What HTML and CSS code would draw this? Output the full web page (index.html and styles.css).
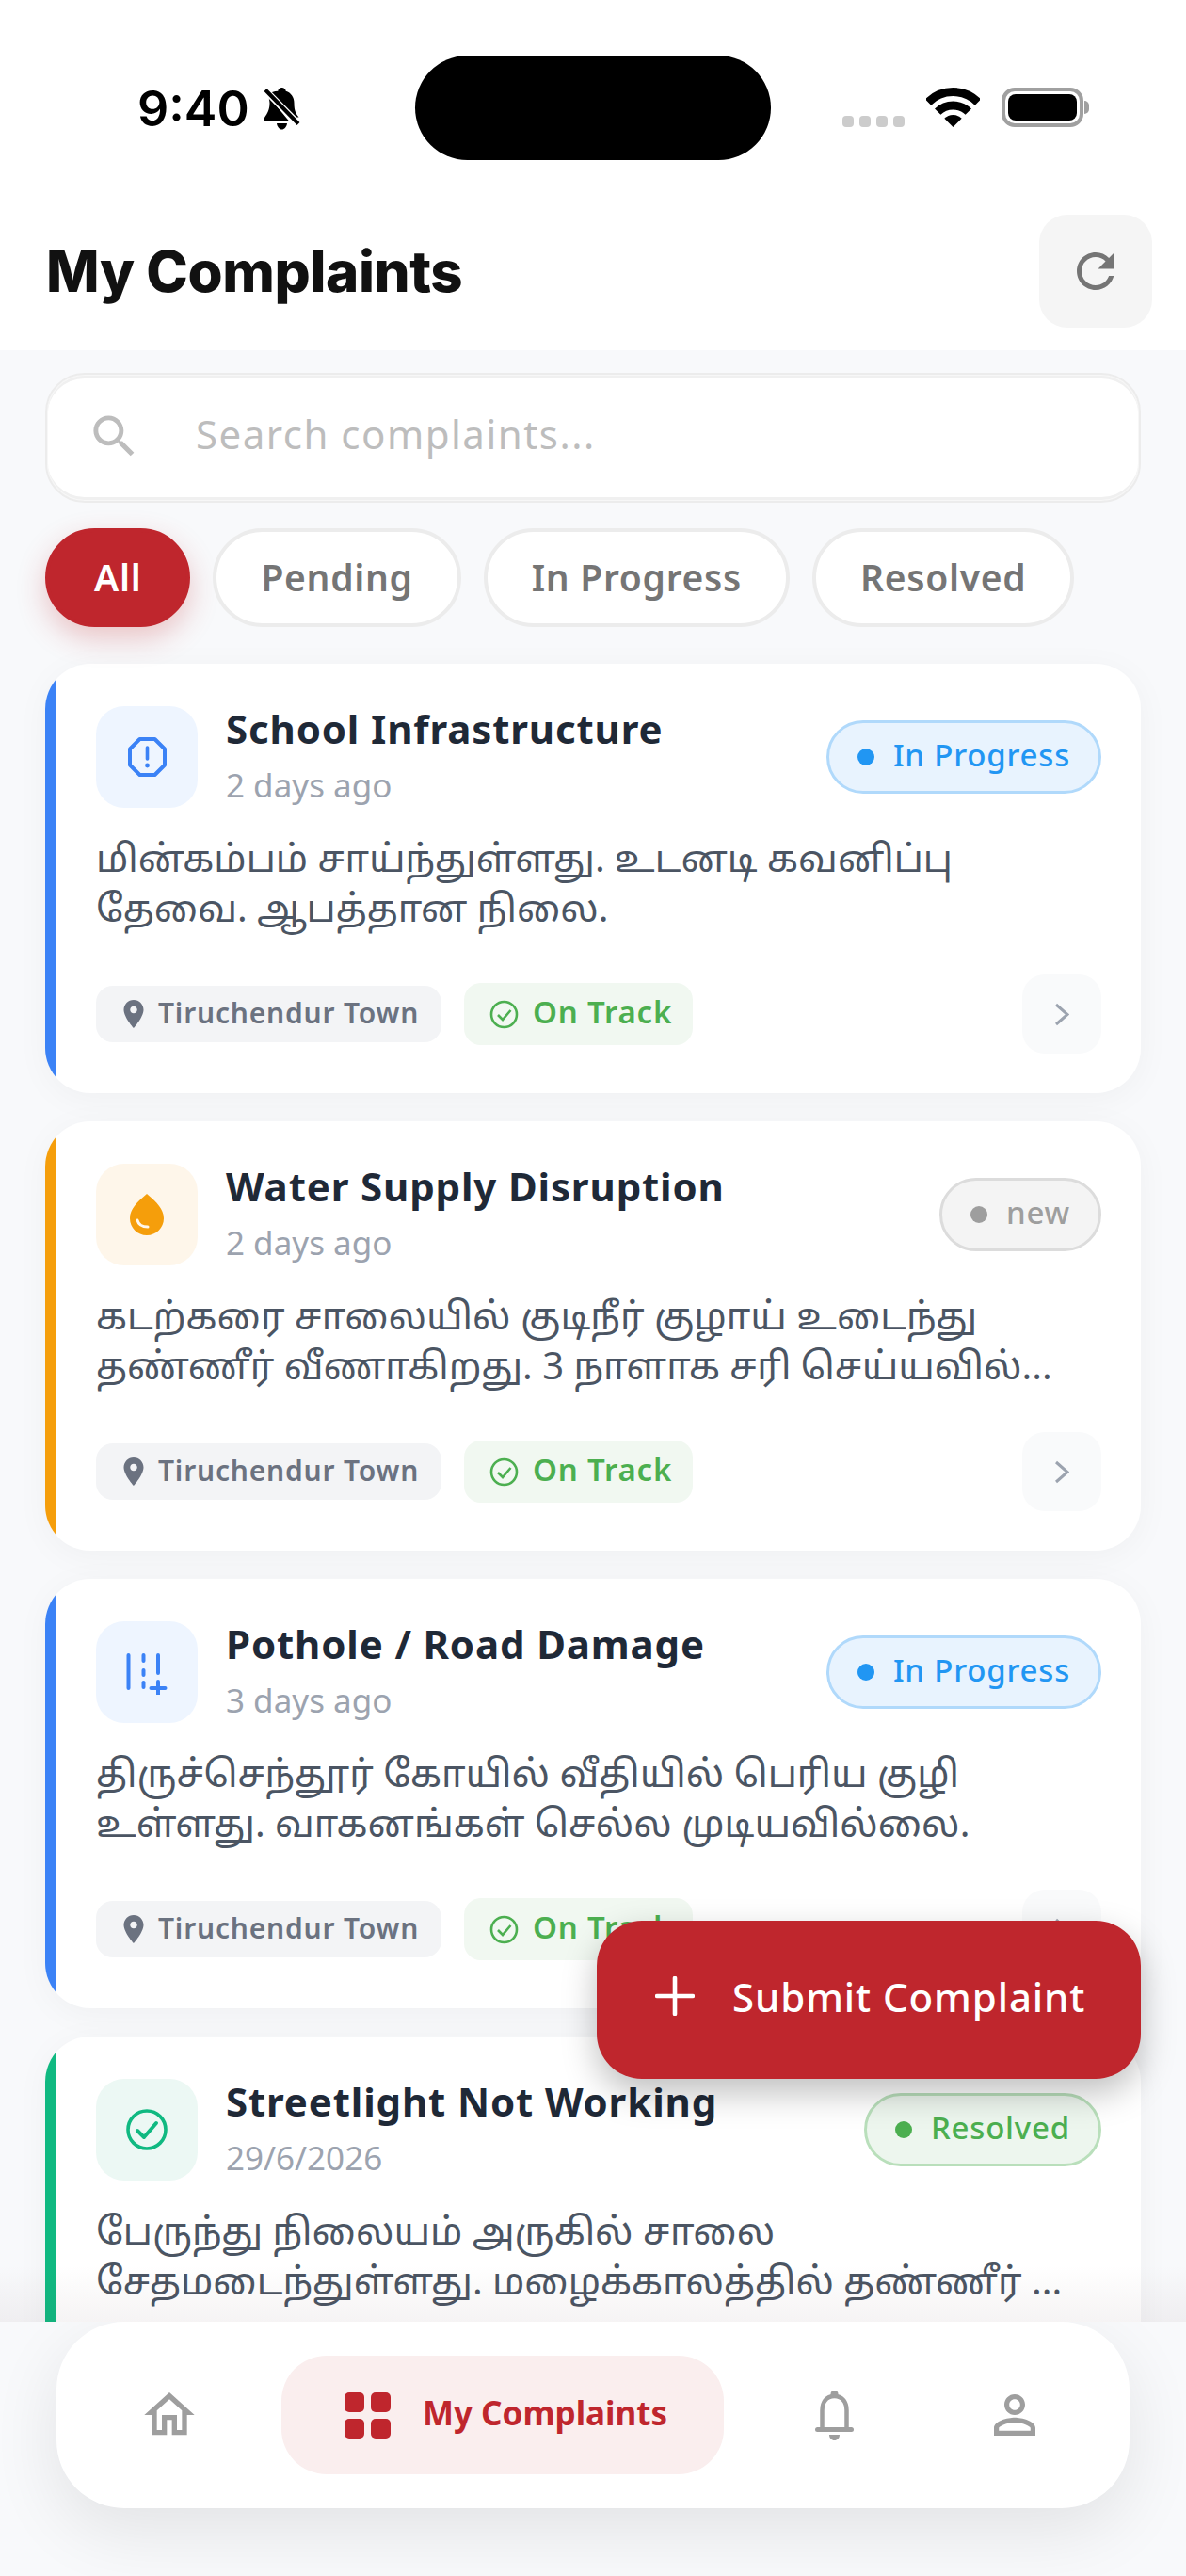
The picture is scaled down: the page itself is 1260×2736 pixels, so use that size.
FILE: index.html
```html
<!DOCTYPE html>
<html lang="en">
<head>
  <meta charset="UTF-8">
  <title>My Complaints</title>
  <link rel="stylesheet" href="styles.css">
</head>
<body>
  <svg class="sprite" width="0" height="0">
    <symbol id="pin" viewBox="0 0 24 24"><path d="M12 2C8.13 2 5 5.13 5 9c0 5.25 7 13 7 13s7-7.75 7-13c0-3.87-3.13-7-7-7zm0 9.5c-1.38 0-2.5-1.12-2.5-2.5s1.12-2.5 2.5-2.5 2.5 1.12 2.5 2.5-1.12 2.5-2.5 2.5z"/></symbol>
    <symbol id="track" viewBox="0 0 31 31"><circle cx="15.5" cy="15.5" r="13.5" fill="none" stroke="currentColor" stroke-width="2.6"/><path d="M9 16l5 5 8.500-10" fill="none" stroke="currentColor" stroke-width="2.6"/></symbol>
    <symbol id="chevron" viewBox="0 0 16 25"><path d="M2 2l12 10.500L2 23" fill="none" stroke="currentColor" stroke-width="3"/></symbol>
  </svg>

  <div class="phone">
    <div class="statusbar">
      <div class="status-left">
        <span class="clock">9:40</span>
        <svg class="bell-off" viewBox="0 0 41 45">
          <path d="M20.500 0c2.500 0 4 1.800 4.200 3.800 5.600 1.700 8.800 6.500 8.800 12.700 0 9 2.300 11.500 5 15l-6 0L7.500 9.500C6 11.500 7.500 13 7.500 16.500c0 7-2.500 11-5.500 15.500-1 2-.3 3.500 2 3.500h24L9 12.500 7 6.500c2-1.400 5-2.400 9.300-2.700C16.500 1.800 18 0 20.500 0z"/>
          <path d="M15 38h11c-.5 4-3 6.500-5.500 6.500S15.500 42 15 38z"/>
          <path d="M2 2l37 37.500" fill="none" stroke="#fff" stroke-width="7"/>
          <path d="M3 2.500l35 36" fill="none" stroke="#000" stroke-width="4"/>
        </svg>
      </div>
      <div class="island"></div>
      <div class="status-right">
        <div class="signal"><i></i><i></i><i></i><i></i></div>
        <svg class="wifi" viewBox="0 0 57 42">
          <path d="M28.500 42L19.300 32.800A13 13 0 0 1 37.700 32.800Z"/>
          <path d="M12.200 25.700A23 23 0 0 1 44.800 25.700" fill="none" stroke="#000" stroke-width="9"/>
          <path d="M2 15.500A37.500 37.500 0 0 1 55 15.500" fill="none" stroke="#000" stroke-width="9"/>
        </svg>
        <div class="battery"><div class="battery-level"></div></div>
        <div class="battery-nub"></div>
      </div>
    </div>

    <header class="topbar">
      <h1>My Complaints</h1>
      <button class="refresh">
        <svg viewBox="0 0 24 24" width="60" height="60"><path d="M17.650 6.350C16.200 4.900 14.210 4 12 4c-4.420 0-7.990 3.580-7.990 8s3.570 8 7.990 8c3.730 0 6.840-2.550 7.730-6h-2.080c-.82 2.330-3.040 4-5.650 4-3.310 0-6-2.690-6-6s2.690-6 6-6c1.660 0 3.140.69 4.220 1.780L13 11h7V4l-2.350 2.350z"/></svg>
      </button>
    </header>

    <main class="content">
      <label class="search">
        <svg viewBox="0 0 24 24" width="59" height="59"><path d="M15.500 14h-.79l-.28-.27C15.410 12.590 16 11.110 16 9.500 16 5.910 13.090 3 9.500 3S3 5.910 3 9.500 5.910 16 9.500 16c1.610 0 3.090-.59 4.230-1.570l.27.28v.79l5 4.990L20.490 19l-4.990-5zm-6 0C7.010 14 5 11.990 5 9.500S7.010 5 9.500 5 14 7.010 14 9.500 11.990 14 9.500 14z"/></svg>
        <input type="text" placeholder="Search complaints...">
      </label>

      <div class="chips">
        <span class="chip active">All</span>
        <span class="chip">Pending</span>
        <span class="chip">In Progress</span>
        <span class="chip">Resolved</span>
      </div>

      <article class="card blue">
        <div class="card-head">
          <div class="card-icon">
            <svg viewBox="0 0 41 42" width="41" height="42"><path d="M12.500 2h16L39 12.500v17L28.500 40h-16L2 29.500v-17z" fill="none" stroke="currentColor" stroke-width="4" stroke-linejoin="round"/><path d="M20.500 11v12" stroke="currentColor" stroke-width="3.600" stroke-linecap="round"/><circle cx="20.500" cy="30" r="2.400" fill="currentColor"/></svg>
          </div>
          <div class="card-title">
            <h2>School Infrastructure</h2>
            <time>2 days ago</time>
          </div>
          <span class="status progress"><i></i>In Progress</span>
        </div>
        <p class="desc">மின்கம்பம் சாய்ந்துள்ளது. உடனடி கவனிப்பு<br>தேவை. ஆபத்தான நிலை.</p>
        <div class="card-foot">
          <span class="place"><svg width="36" height="36"><use href="#pin"/></svg>Tiruchendur Town</span>
          <span class="ontrack"><svg width="31" height="31"><use href="#track"/></svg>On Track</span>
          <span class="open"><svg width="16" height="25"><use href="#chevron"/></svg></span>
        </div>
      </article>

      <article class="card orange">
        <div class="card-head">
          <div class="card-icon">
            <svg viewBox="0 0 36 44" width="36" height="44"><path d="M18 0C10 7 0 15 0 26c0 10 8 18 18 18s18-8 18-18C36 15 26 7 18 0z" fill="currentColor"/><path d="M8 28c1 4 5 7 11 7" fill="none" stroke="#fff7eb" stroke-width="3" stroke-linecap="round"/></svg>
          </div>
          <div class="card-title">
            <h2>Water Supply Disruption</h2>
            <time>2 days ago</time>
          </div>
          <span class="status fresh"><i></i>new</span>
        </div>
        <p class="desc">கடற்கரை சாலையில் குடிநீர் குழாய் உடைந்து<br>தண்ணீர் வீணாகிறது. 3 நாளாக சரி செய்யவில்...</p>
        <div class="card-foot">
          <span class="place"><svg width="36" height="36"><use href="#pin"/></svg>Tiruchendur Town</span>
          <span class="ontrack"><svg width="31" height="31"><use href="#track"/></svg>On Track</span>
          <span class="open"><svg width="16" height="25"><use href="#chevron"/></svg></span>
        </div>
      </article>

      <article class="card blue">
        <div class="card-head">
          <div class="card-icon">
            <svg viewBox="0 0 44 48" width="44" height="48" fill="none" stroke="currentColor" stroke-width="4" stroke-linecap="round"><path d="M2.500 6v35M18.500 6v6M18.500 22v5M18.500 35v5M34 6v19M34 34v15M26.500 41h15"/></svg>
          </div>
          <div class="card-title">
            <h2>Pothole / Road Damage</h2>
            <time>3 days ago</time>
          </div>
          <span class="status progress"><i></i>In Progress</span>
        </div>
        <p class="desc">திருச்செந்தூர் கோயில் வீதியில் பெரிய குழி<br>உள்ளது. வாகனங்கள் செல்ல முடியவில்லை.</p>
        <div class="card-foot">
          <span class="place"><svg width="36" height="36"><use href="#pin"/></svg>Tiruchendur Town</span>
          <span class="ontrack"><svg width="31" height="31"><use href="#track"/></svg>On Track</span>
          <span class="open"><svg width="16" height="25"><use href="#chevron"/></svg></span>
        </div>
      </article>

      <article class="card green">
        <div class="card-head">
          <div class="card-icon">
            <svg viewBox="0 0 44 44" width="44" height="44" fill="none" stroke="currentColor" stroke-width="3.600"><circle cx="22" cy="22" r="20"/><path d="M12 23l7 7 13-15" stroke-width="4" stroke-linecap="round" stroke-linejoin="round"/></svg>
          </div>
          <div class="card-title">
            <h2>Streetlight Not Working</h2>
            <time>29/6/2026</time>
          </div>
          <span class="status done"><i></i>Resolved</span>
        </div>
        <p class="desc">பேருந்து நிலையம் அருகில் சாலை<br>சேதமடைந்துள்ளது. மழைக்காலத்தில் தண்ணீர் ...</p>
      </article>

      <div class="fade"></div>
    </main>

    <button class="fab">
      <svg viewBox="0 0 42 42" width="42" height="42"><path d="M21 2v38M2 21h38" stroke="#fff" stroke-width="4.600" stroke-linecap="round"/></svg>
      Submit Complaint
    </button>

    <div class="bottom">
      <nav class="tabs">
        <a class="tab">
          <svg viewBox="0 0 24 24" width="64" height="64"><path d="M12 5.690l5 4.500V18h-2v-6H9v6H7v-7.810l5-4.500M12 3L2 12h3v8h6v-6h2v6h6v-8h3L12 3z"/></svg>
        </a>
        <a class="tab tab-active">
          <svg viewBox="0 0 49 49" width="49" height="49"><rect width="21" height="21" rx="5"/><rect x="28" width="21" height="21" rx="5"/><rect y="28" width="21" height="21" rx="5"/><rect x="28" y="28" width="21" height="21" rx="5"/></svg>
          <span>My Complaints</span>
        </a>
        <a class="tab">
          <svg viewBox="0 0 41 53" width="41" height="53"><path d="M20.500 6C11.500 6 7.500 13 7.500 21v20.500h26V21C33.500 13 29.500 6 20.500 6z" fill="none" stroke="currentColor" stroke-width="4.500"/><circle cx="20.500" cy="4" r="4"/><path d="M2.500 41.500h36" stroke="currentColor" stroke-width="5" stroke-linecap="round"/><path d="M15 47h11c0 3.500-2.500 6-5.500 6S15 50.500 15 47z"/></svg>
        </a>
        <a class="tab">
          <svg viewBox="0 0 24 24" width="66" height="66"><path d="M12 5.900c1.160 0 2.100.94 2.100 2.100s-.94 2.100-2.100 2.100S9.900 9.160 9.900 8s.94-2.100 2.100-2.100m0 9c2.970 0 6.100 1.460 6.100 2.100v1.100H5.900V17c0-.64 3.130-2.100 6.100-2.100M12 4C9.790 4 8 5.790 8 8s1.790 4 4 4 4-1.790 4-4-1.790-4-4-4zm0 9c-2.670 0-8 1.340-8 4v3h16v-3c0-2.660-5.330-4-8-4z"/></svg>
        </a>
      </nav>
    </div>
  </div>
</body>
</html>
```

FILE: styles.css
```css
* {
  box-sizing: border-box;
}

body {
  margin: 0;
  font-family: "Noto Sans", "Noto Sans Tamil", sans-serif;
  background: #f8f9fb;
}

.sprite {
  position: absolute;
}

.phone {
  position: relative;
  width: 1260px;
  height: 2736px;
  display: flex;
  flex-direction: column;
  overflow: hidden;
  background: #f8f9fb;
}

/* status bar */
.statusbar {
  display: grid;
  grid-template-columns: 441px 378px 1fr;
  height: 228px;
  background: #fff;
}

.status-left {
  display: flex;
  align-items: center;
  gap: 14px;
  height: 45px;
  margin-top: 93px;
  padding-left: 146px;
}

.clock {
  font-family: Inter, sans-serif;
  font-size: 52px;
  font-weight: 600;
  line-height: 45px;
  color: #000;
}

.bell-off {
  width: 41px;
  height: 45px;
}

.island {
  height: 111px;
  margin-top: 59px;
  border-radius: 56px;
  background: #000;
}

.status-right {
  display: flex;
  align-items: flex-end;
  height: 42px;
  margin-top: 93px;
  padding-left: 76px;
}

.signal {
  display: flex;
  gap: 6px;
  margin-right: 23px;
}

.signal i {
  width: 12px;
  height: 12px;
  border-radius: 4px;
  background: #ccc;
}

.wifi {
  width: 57px;
  height: 42px;
  margin-right: 23px;
}

.battery {
  width: 87px;
  height: 42px;
  padding: 3px;
  border: 4px solid #a0a0a0;
  border-radius: 14px;
}

.battery-level {
  height: 100%;
  border-radius: 8px;
  background: #000;
}

.battery-nub {
  width: 5px;
  height: 14px;
  margin: 0 0 14px 1px;
  border-radius: 0 5px 5px 0;
  background: #a0a0a0;
}

/* header */
.topbar {
  display: flex;
  align-items: center;
  justify-content: space-between;
  padding: 0 36px 24px 49px;
  background: #fff;
}

.topbar h1 {
  margin: 0;
  font-family: Inter, sans-serif;
  font-size: 60px;
  font-weight: 800;
  letter-spacing: -.4px;
  color: #111;
}

.refresh {
  display: flex;
  align-items: center;
  justify-content: center;
  width: 120px;
  height: 120px;
  border: 0;
  border-radius: 30px;
  background: #f5f5f5;
  fill: #757575;
}

/* list */
.content {
  position: relative;
  flex: 1;
  min-height: 0;
  overflow: hidden;
  padding: 24px 48px 0;
}

.search {
  display: flex;
  align-items: center;
  gap: 57px;
  height: 138px;
  padding: 0 42px 10px 42px;
  border: 2px solid #ececec;
  border-radius: 42px;
  background: #fff;
  box-shadow: inset 0 0 0 1px #f7f7f7, inset 0 4px 0 #f0f0f0, inset 0 -4px 0 #f0f0f0;
  fill: #bdbdbd;
}

.search svg {
  margin-top: 6px;
}

.search input {
  flex: 1;
  border: 0;
  outline: 0;
  padding: 0;
  font: 400 42px "Noto Sans", sans-serif;
  letter-spacing: 1.5px;
  background: transparent;
}

.search input::placeholder {
  color: #bdbdbd;
  opacity: 1;
}

.chips {
  display: flex;
  gap: 24px;
  margin: 27px 0 39px;
}

.chip {
  display: flex;
  align-items: center;
  height: 105px;
  padding: 0 47px 3px;
  border: 4px solid #ececec;
  border-radius: 53px;
  background: #fff;
  font-size: 39px;
  font-weight: 600;
  letter-spacing: .7px;
  color: #757575;
}

.chip.active {
  padding: 0 48px 3px;
  border-color: #bf262d;
  background: #bf262d;
  color: #fff;
  box-shadow: 0 12px 30px rgba(191, 38, 45, .25);
}

.card {
  height: 456px;
  margin-bottom: 30px;
  padding: 45px 42px 0 54px;
  border-radius: 48px;
  box-shadow: 0 6px 36px rgba(0, 0, 0, .04);
}

.card.blue {
  background: linear-gradient(to right, #3b82f6 12px, #fff 12px);
}

.card.orange {
  background: linear-gradient(to right, #f59e0b 12px, #fff 12px);
}

.card.green {
  background: linear-gradient(to right, #10b981 12px, #fff 12px);
}

.card-head {
  display: flex;
  align-items: flex-start;
  gap: 30px;
}

.card-icon {
  display: flex;
  align-items: center;
  justify-content: center;
  flex: none;
  width: 108px;
  height: 108px;
  border-radius: 30px;
}

.blue .card-icon {
  background: #eef5ff;
  color: #3b82f6;
}

.orange .card-icon {
  background: #fef6ea;
  color: #f59e0b;
}

.green .card-icon {
  background: #ecf8f4;
  color: #10b981;
}

.card-title {
  flex: 1;
  min-width: 0;
}

.card-title h2 {
  margin: -3px 0 0;
  font-size: 42px;
  font-weight: 700;
  line-height: 54px;
  letter-spacing: .85px;
  color: #1f2937;
}

.card-title time {
  display: block;
  margin-top: 11px;
  font-size: 35px;
  line-height: 44px;
  color: #9ca3af;
}

.status {
  display: flex;
  align-items: center;
  gap: 20px;
  flex: none;
  height: 78px;
  margin-top: 15px;
  padding: 0 30px 6px;
  border: 3px solid;
  border-radius: 39px;
  font-size: 33px;
  font-weight: 500;
  letter-spacing: .8px;
}

.status i {
  width: 18px;
  height: 18px;
  margin-top: 6px;
  border-radius: 50%;
  background: currentColor;
}

.status.progress {
  background: #e8f3fe;
  border-color: #b0d9fb;
  color: #2196f3;
}

.status.fresh {
  background: #f4f4f4;
  border-color: #dcdcdc;
  color: #9e9e9e;
}

.status.done {
  background: #edf6ee;
  border-color: #b9dfbb;
  color: #4caf50;
}

.desc {
  height: 106px;
  margin: 26px 0 0;
  font-size: 40px;
  line-height: 53px;
  color: #4b5563;
}

.card-foot {
  display: flex;
  align-items: center;
  gap: 24px;
  margin-top: 45px;
}

.place {
  display: flex;
  align-items: center;
  gap: 8px;
  height: 60px;
  padding: 0 24px 3px 22px;
  border-radius: 18px;
  background: #f3f4f6;
  fill: #6b7280;
  font-size: 30px;
  font-weight: 600;
  letter-spacing: .8px;
  color: #6b7280;
}

.place svg {
  margin-top: 3px;
}

.ontrack {
  display: flex;
  align-items: center;
  gap: 15px;
  height: 66px;
  padding: 0 22px 6px 27px;
  border-radius: 18px;
  background: #f1f8f1;
  font-size: 33px;
  font-weight: 600;
  letter-spacing: .8px;
  color: #4caf50;
}

.ontrack svg {
  margin-top: 6px;
}

.open {
  display: flex;
  align-items: center;
  justify-content: center;
  width: 84px;
  height: 84px;
  margin-left: auto;
  border-radius: 24px;
  background: #f9fafb;
  color: #9ca3af;
}

.fade {
  position: absolute;
  left: 0;
  right: 0;
  bottom: 0;
  height: 60px;
  background: linear-gradient(to bottom, rgba(70, 30, 40, 0), rgba(70, 30, 40, .05));
}

/* floating button */
.fab {
  position: absolute;
  top: 2040px;
  right: 48px;
  display: flex;
  align-items: center;
  gap: 40px;
  width: 578px;
  height: 168px;
  padding: 0 0 8px 62px;
  border: 0;
  border-radius: 48px;
  background: #bf262d;
  box-shadow: 0 15px 36px rgba(0, 0, 0, .25);
  font-family: "Noto Sans", sans-serif;
  font-size: 42px;
  font-weight: 500;
  letter-spacing: .9px;
  color: #fff;
}

/* bottom tabs */
.bottom {
  height: 270px;
  padding: 0 60px;
  background: #f8f9fb;
}

.tabs {
  display: flex;
  align-items: center;
  height: 198px;
  padding: 0 24px;
  border-radius: 72px;
  background: #fff;
  box-shadow: 0 24px 72px rgba(0, 0, 0, .09);
}

.tab {
  display: flex;
  align-items: center;
  justify-content: center;
  width: 192px;
  height: 126px;
  color: #9e9e9e;
  fill: #9e9e9e;
}

.tab-active {
  gap: 34px;
  width: 470px;
  margin: 0 21px 0 23px;
  padding-left: 7px;
  border-radius: 48px;
  background: #faeeee;
  font-size: 35px;
  font-weight: 700;
  color: #bf262d;
  fill: #bf262d;
}

.tab-active span {
  margin-top: -6px;
}
```
